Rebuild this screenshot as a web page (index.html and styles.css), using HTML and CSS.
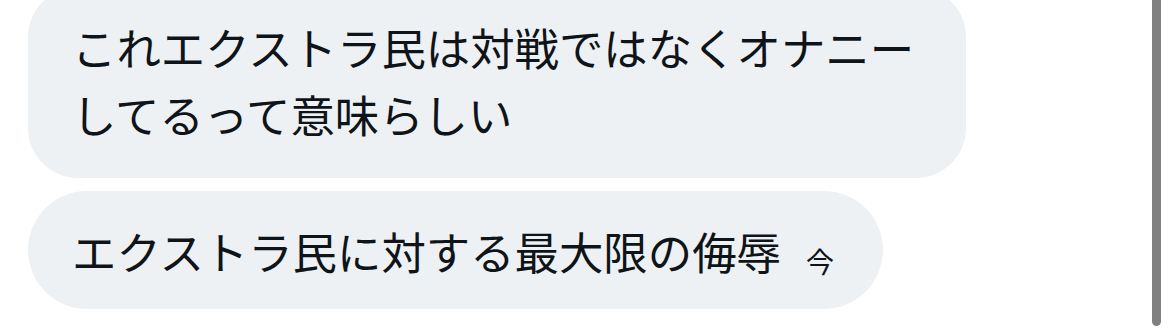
FILE: index.html
```html
<!DOCTYPE html>
<html lang="ja">
<head>
    <meta charset="UTF-8">
    <meta name="viewport" content="width=device-width, initial-scale=1.0">
    <title>Messages</title>
    <link rel="stylesheet" href="styles.css">
</head>
<body>
    <div class="thread">
        <div class="bubble bubble-multi">
            <p class="bubble-text">これエクストラ民は対戦ではなくオナニーしてるって意味らしい</p>
        </div>
        <div class="bubble">
            <p class="bubble-text">エクストラ民に対する最大限の侮辱<span class="time">今</span></p>
        </div>
    </div>
    <div class="scrollbar"></div>
</body>
</html>
```

FILE: styles.css
```css
* {
    margin: 0;
    padding: 0;
    box-sizing: border-box;
}

body {
    font-family: "Noto Sans CJK JP", "Noto Sans", sans-serif;
    background: #ffffff;
    color: #0f1419;
    width: 1170px;
    height: 328px;
    overflow: hidden;
    position: relative;
}

.thread {
    display: flex;
    flex-direction: column;
    align-items: flex-start;
    gap: 13px;
    padding-left: 28px;
    margin-top: -13px;
}

.bubble {
    background: #eef1f3;
    border-radius: 59px;
    padding: 26px 47px 25px 44px;
    max-width: 938px;
}

.bubble-multi {
    border-radius: 50px;
    padding-bottom: 31px;
}

.bubble-text {
    font-size: 44.4px;
    line-height: 67px;
}

.time {
    font-size: 28px;
    line-height: 1;
    margin-left: 25px;
    margin-right: 2px;
    vertical-align: -3px;
}

.scrollbar {
    position: absolute;
    top: -10px;
    left: 1152px;
    width: 9px;
    height: 336px;
    border-radius: 5px;
    background: #808080;
}
```
